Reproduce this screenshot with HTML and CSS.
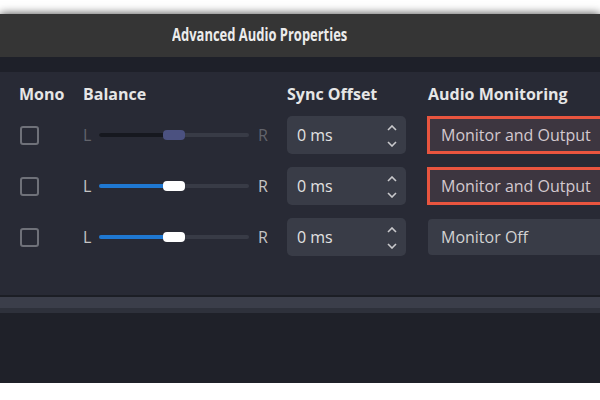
FILE: index.html
```html
<!DOCTYPE html>
<html>
<head>
    <link rel="stylesheet" href="styles.css">
</head>
<body>
    <div class="window">
        <div class="titlebar"><span class="title">Advanced Audio Properties</span></div>
        <div class="toolbar"></div>

        <div class="panel">
            <div class="grid">
                <div class="head">Mono</div>
                <div class="head">Balance</div>
                <div class="head">Sync Offset</div>
                <div class="head">Audio Monitoring</div>

                <!-- row 1: balance disabled -->
                <div class="cell"><span class="check"></span></div>
                <div class="cell balance disabled">
                    <span class="side">L</span>
                    <span class="track"><span class="fill"></span><span class="thumb"></span></span>
                    <span class="side">R</span>
                </div>
                <div class="cell">
                    <div class="spin">
                        <span>0 ms</span>
                        <span class="arrows">
                            <svg width="10" height="6" viewBox="0 0 10 6"><path d="M1 5 L5 1 L9 5" /></svg>
                            <svg width="10" height="6" viewBox="0 0 10 6"><path d="M1 1 L5 5 L9 1" /></svg>
                        </span>
                    </div>
                </div>
                <div class="cell"><div class="combo marked">Monitor and Output</div></div>

                <!-- row 2 -->
                <div class="cell"><span class="check"></span></div>
                <div class="cell balance">
                    <span class="side">L</span>
                    <span class="track"><span class="fill"></span><span class="thumb"></span></span>
                    <span class="side">R</span>
                </div>
                <div class="cell">
                    <div class="spin">
                        <span>0 ms</span>
                        <span class="arrows">
                            <svg width="10" height="6" viewBox="0 0 10 6"><path d="M1 5 L5 1 L9 5" /></svg>
                            <svg width="10" height="6" viewBox="0 0 10 6"><path d="M1 1 L5 5 L9 1" /></svg>
                        </span>
                    </div>
                </div>
                <div class="cell"><div class="combo marked">Monitor and Output</div></div>

                <!-- row 3 -->
                <div class="cell"><span class="check"></span></div>
                <div class="cell balance">
                    <span class="side">L</span>
                    <span class="track"><span class="fill"></span><span class="thumb"></span></span>
                    <span class="side">R</span>
                </div>
                <div class="cell">
                    <div class="spin">
                        <span>0 ms</span>
                        <span class="arrows">
                            <svg width="10" height="6" viewBox="0 0 10 6"><path d="M1 5 L5 1 L9 5" /></svg>
                            <svg width="10" height="6" viewBox="0 0 10 6"><path d="M1 1 L5 5 L9 1" /></svg>
                        </span>
                    </div>
                </div>
                <div class="cell"><div class="combo">Monitor Off</div></div>
            </div>
        </div>

        <div class="scrollbar"></div>
        <div class="footer"></div>
    </div>
</body>
</html>
```

FILE: styles.css
```css
html, body {
    margin: 0;
    background: #ffffff;
    overflow: hidden;
}
.window {
    margin-top: 14px;
    height: 369px;
    width: 600px;
    display: flex;
    flex-direction: column;
    background: #1f2129;
    box-shadow: 0 0 9px rgba(0, 0, 0, 0.75);
    font-family: "Open Sans", "Noto Sans", sans-serif;
    overflow: hidden;
}
/* the window is wider than the shot, so the title sits left of centre */
.titlebar {
    height: 43px;
    box-sizing: border-box;
    background: #353535;
    color: #ececec;
    display: flex;
    align-items: center;
    justify-content: center;
    padding: 0 80px 3px 0;
}
.title {
    font-family: "Open Sans", "Noto Sans", sans-serif;
    font-weight: bold;
    font-size: 18px;
    transform: scaleX(0.72);
    white-space: nowrap;
}
.toolbar {
    height: 15px;
    background: #1e2029;
}
.panel {
    height: 223px;
    background: #282a35;
    padding-top: 10px;
    box-sizing: border-box;
}
.grid {
    display: grid;
    grid-template-columns: 64px 204px 141px 200px;
    grid-template-rows: 26px 51px 51px 51px;
    padding-left: 19px;
}
.head {
    color: #e6e6e6;
    font-weight: bold;
    font-size: 16px;
    display: flex;
    align-items: center;
    margin-top: -2px;
}
.cell {
    display: flex;
    align-items: center;
    padding-top: 3px;
}
.check {
    width: 15px;
    height: 15px;
    border: 2px solid #6f7179;
    border-radius: 3px;
    margin-left: 1px;
}
.balance {
    color: #c4c4c4;
    font-size: 16px;
}
.balance.disabled {
    color: #62646c;
}
.side {
    width: 16px;
}
.track {
    position: relative;
    width: 150px;
    height: 4px;
    border-radius: 2px;
    background: #383b46;
    margin-right: 9px;
}
.fill {
    display: block;
    width: 66px;
    height: 4px;
    border-radius: 2px;
    background: #1f78d2;
}
.disabled .fill {
    background: #16181f;
}
.thumb {
    position: absolute;
    left: 64px;
    top: -3px;
    width: 22px;
    height: 10px;
    border-radius: 4px;
    background: #ffffff;
}
.disabled .thumb {
    background: #4b5180;
}
.spin {
    width: 119px;
    height: 38px;
    box-sizing: border-box;
    background: #393c47;
    border-radius: 5px;
    padding: 0 9px 0 10px;
    display: flex;
    align-items: center;
    justify-content: space-between;
    color: #e2e2e2;
    font-size: 16px;
}
.arrows {
    display: flex;
    flex-direction: column;
    gap: 10px;
    padding-top: 1px;
}
.arrows svg {
    display: block;
    fill: none;
    stroke: #c9c9cc;
    stroke-width: 1.6;
}
.combo {
    width: 200px;
    height: 36px;
    box-sizing: border-box;
    background: #393c47;
    border-radius: 4px;
    padding-left: 13px;
    display: flex;
    align-items: center;
    color: #d2d2d2;
    font-size: 16px;
}
.combo.marked {
    background: #3d3640;
    color: #d3c9cf;
    border-radius: 0;
    outline: 3px solid #e8553f;
    outline-offset: -2px;
}
.scrollbar {
    height: 11px;
    border-top: 2px solid #1c1e25;
    border-bottom: 5px solid #2e313b;
    background: #3b3e4a;
}
.footer {
    flex: 1;
    background: #1f2129;
}
```
